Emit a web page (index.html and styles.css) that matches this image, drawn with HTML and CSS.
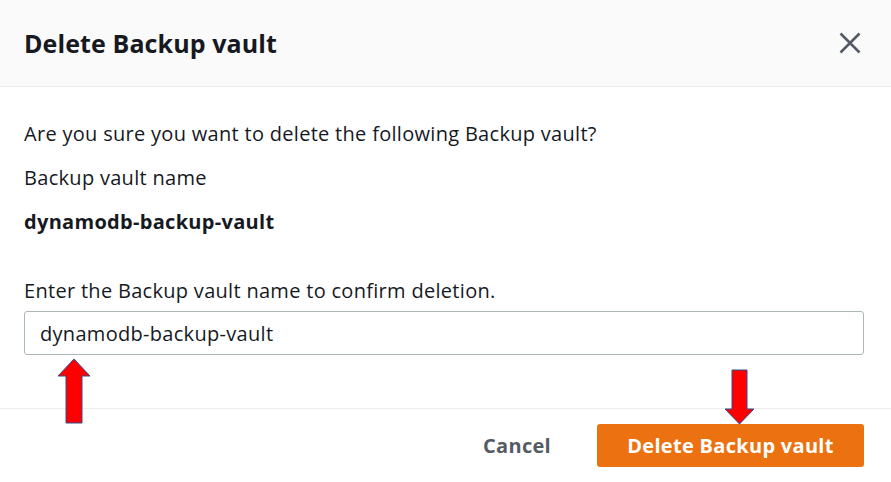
FILE: index.html
```html
<!DOCTYPE html>
<html>
<head>
<meta charset="utf-8">
<link rel="stylesheet" href="styles.css">
</head>
<body>
<div class="modal">
  <div class="header">
    <h1 class="title">Delete Backup vault</h1>
    <button class="close" aria-label="Close">
      <svg width="22" height="22" viewBox="0 0 22 22"><path d="M1.5 1.5 L20.5 20.5 M20.5 1.5 L1.5 20.5" stroke="#545b64" stroke-width="2.6" fill="none"/></svg>
    </button>
  </div>
  <div class="content">
    <p class="line">Are you sure you want to delete the following Backup vault?</p>
    <p class="line">Backup vault name</p>
    <p class="line strong">dynamodb-backup-vault</p>
    <label class="label" for="confirm">Enter the Backup vault name to confirm deletion.</label>
    <div class="field">
      <input id="confirm" class="input" type="text" value="dynamodb-backup-vault">
      <svg class="arrow-up" width="36" height="66" viewBox="0 0 36 66"><path d="M17 1 L33 18 L25 18 L25 65 L9 65 L9 18 L1 18 Z" fill="#ff0000" stroke="#2f4f8f" stroke-width="1"/></svg>
    </div>
  </div>
  <div class="footer">
    <button class="cancel">Cancel</button>
    <div class="primary-wrap">
      <button class="primary">Delete Backup vault</button>
      <svg class="arrow-down" width="32" height="56" viewBox="0 0 32 56"><path d="M8 1 L23 1 L23 40 L30 40 L15.5 55 L1 40 L8 40 Z" fill="#ff0000" stroke="#2f4f8f" stroke-width="1"/></svg>
    </div>
  </div>
</div>
</body>
</html>
```
FILE: styles.css
```css
html, body {
  margin: 0;
  padding: 0;
  background: #ffffff;
}
body {
  font-family: "Open Sans", "Noto Sans", Arial, sans-serif;
  color: #16191f;
  width: 891px;
  height: 482px;
  overflow: hidden;
}
.modal {
  width: 891px;
}
.header {
  height: 87px;
  background: #fafafa;
  border-bottom: 1px solid #eaeded;
  display: flex;
  align-items: center;
  justify-content: space-between;
  padding: 0 30px 0 24px;
  box-sizing: border-box;
}
.title {
  margin: 0;
  font-size: 25px;
  font-weight: 700;
  letter-spacing: 0.1px;
  color: #16191f;
}
.close {
  border: 0;
  background: transparent;
  padding: 0;
  width: 22px;
  height: 22px;
  display: flex;
  align-items: center;
  justify-content: center;
}
.content {
  padding: 34px 27px 0 24px;
  height: 322px;
  box-sizing: border-box;
  border-bottom: 1px solid #eaeded;
}
.line {
  margin: 0 0 18px 0;
  font-size: 20px;
  line-height: 26px;
  letter-spacing: 0.3px;
}
.strong {
  font-weight: 700;
}
.label {
  display: block;
  margin-top: 43px;
  font-size: 20px;
  line-height: 26px;
  letter-spacing: 0.3px;
}
.field {
  position: relative;
  margin-top: 7px;
}
.input {
  display: block;
  width: 100%;
  box-sizing: border-box;
  height: 44px;
  border: 1px solid #aab7b8;
  border-radius: 3px;
  padding: 0 15px;
  font-family: inherit;
  font-size: 20px;
  letter-spacing: 0.3px;
  color: #16191f;
  background: #fff;
  outline: none;
}
.arrow-up {
  position: absolute;
  left: 33px;
  top: 47px;
}
.footer {
  display: flex;
  justify-content: flex-end;
  align-items: center;
  padding: 15px 27px 0 0;
  gap: 46px;
}
.cancel {
  border: 0;
  background: transparent;
  font-family: inherit;
  font-weight: 700;
  font-size: 20px;
  letter-spacing: 0.3px;
  color: #545b64;
  padding: 0;
}
.primary-wrap {
  position: relative;
}
.primary {
  width: 267px;
  height: 43px;
  border: 0;
  border-radius: 3px;
  background: #ec7211;
  color: #ffffff;
  font-family: inherit;
  font-weight: 700;
  font-size: 20px;
  letter-spacing: 0.3px;
  padding: 0;
}
.arrow-down {
  position: absolute;
  left: 127px;
  top: -55px;
}
```
